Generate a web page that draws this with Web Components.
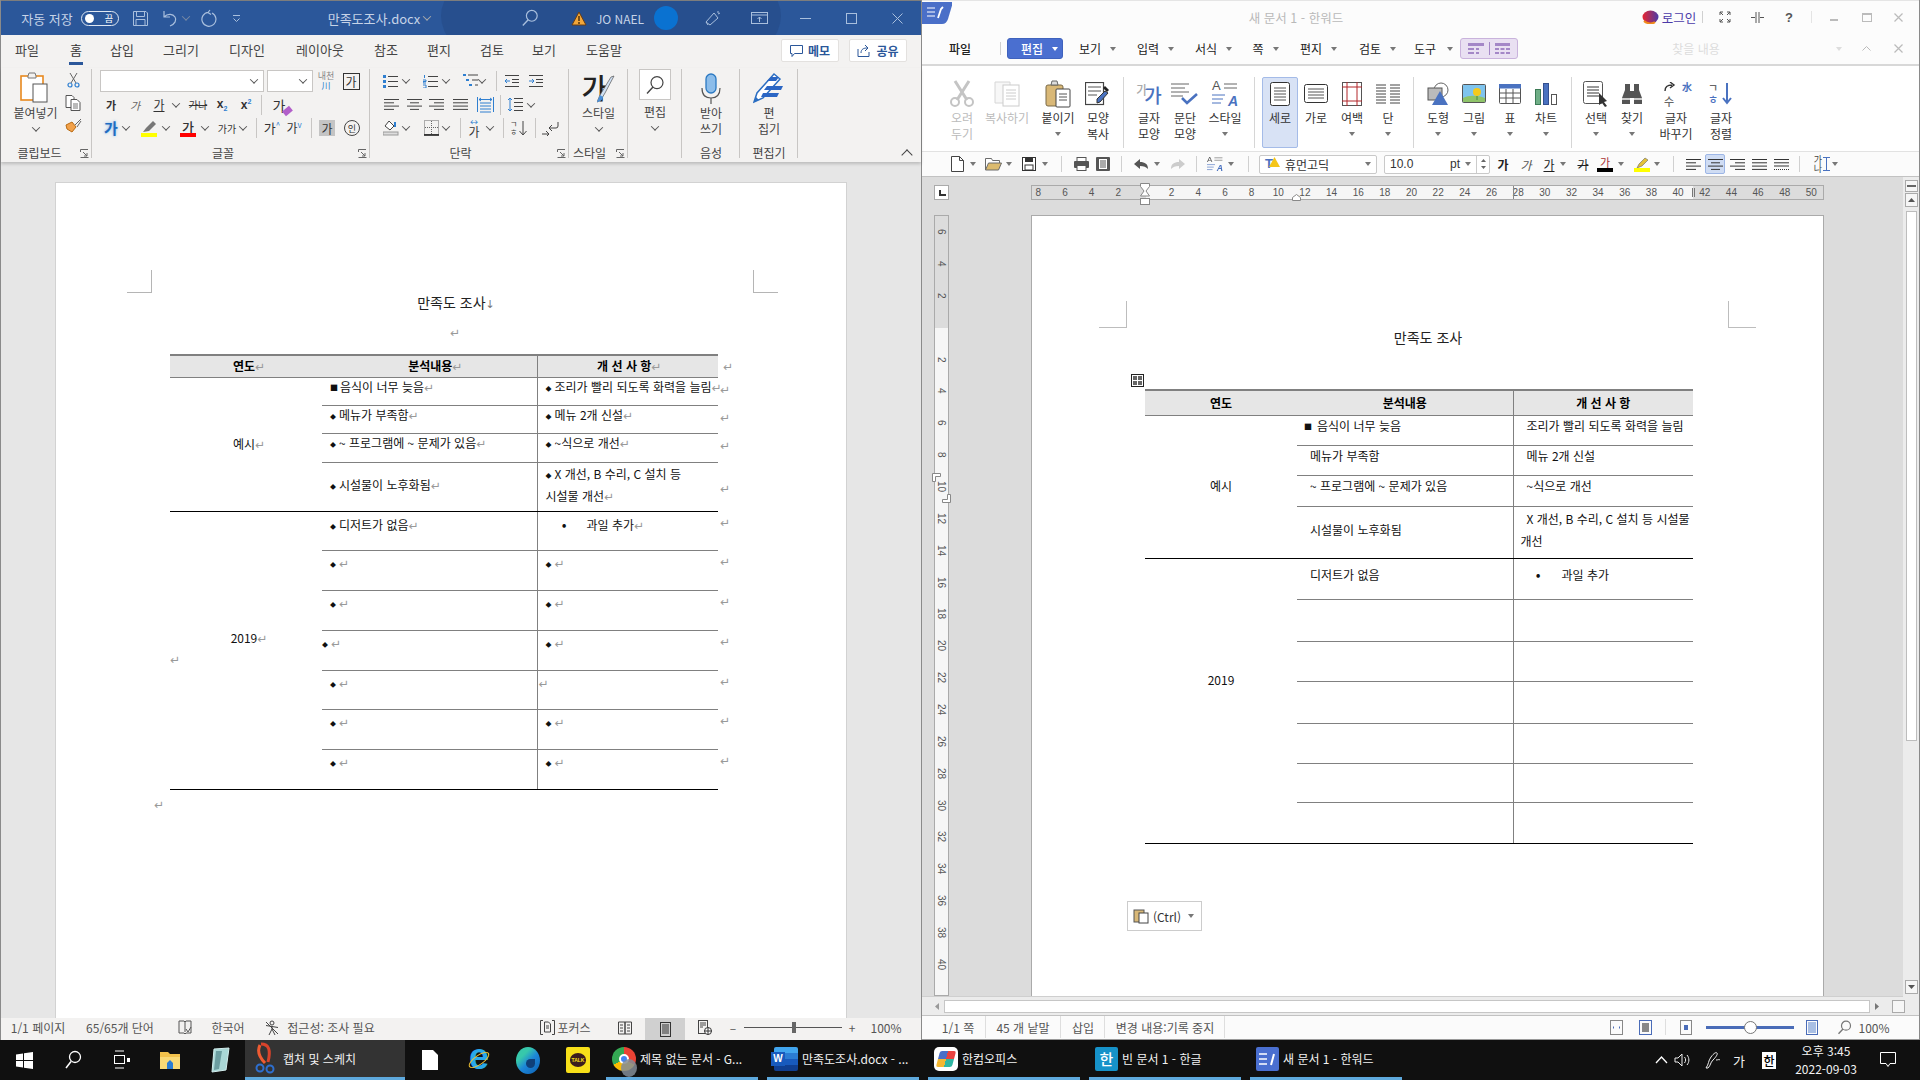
<!DOCTYPE html>
<html lang="ko">
<head>
<meta charset="utf-8">
<title>만족도조사</title>
<style>
  html, body { margin: 0; height: 100%; overflow: hidden; background: #777; }
  body { font: 12px "Noto Sans CJK KR", "Noto Sans", sans-serif; }
</style>
</head>
<body>
<desktop-shell></desktop-shell>
<script>
const svg = (w, h, inner, attrs = '') => `<svg width="${w}" height="${h}" viewBox="0 0 ${w} ${h}" fill="none" ${attrs} style="display:block;flex:none">${inner}</svg>`;

// places items so each is centred on the given x, in flow
function line(x0, items, cls = 'c') {
  let pos = x0;
  return items.map(([c, html], i) => {
    const next = items[i + 1] ? items[i + 1][0] : c + 40;
    const half = Math.max(0.5, Math.min(c - pos, (next - c) / 2));
    const ml = c - half - pos;
    pos = c + half;
    return `<span class="${cls}" style="margin-left:${ml}px;width:${2 * half}px">${html}</span>`;
  }).join('');
}

const COMMON = `
  * { box-sizing: border-box; }
  .c { display: flex; justify-content: center; align-items: center; flex: none; white-space: nowrap; height: 100%; }
  .c > * { flex: none; }
  .row { display: flex; align-items: center; }
  .chev::before { content: ""; display: block; width: 5px; height: 5px; border: solid #555; border-width: 0 1px 1px 0; transform: rotate(45deg) translate(-1px,-1px); }
  .tri { display: block; width: 0; height: 0; border: 3.5px solid transparent; border-top: 4px solid #777; border-bottom: 0; }
  .vs { display: block; width: 1px; height: 100%; background: #c8c6c4; }
`;

function define(tag, css, html) {
  customElements.define(tag, class extends HTMLElement {
    connectedCallback() {
      if (this.shadowRoot) return;
      this.attachShadow({ mode: 'open' });
      const out = typeof html === 'function' ? html(this) : html;
      this.shadowRoot.innerHTML = `<style>${COMMON}${css}</style>${out}`;
    }
  });
}

/* ---------- icons ---------- */
const L = '#a9bfdd', G = '#444', B = '#2f7fd0';
const icon = {
  save: svg(17, 17, `<path d="M1.5 1.5h12.5l1.500 1.500v12.500h-14zM4.500 1.500v5h8v-5M4 15.500v-6h9v6" stroke="${L}"/>`),
  undo: svg(18, 18, `<path d="M3 2v6h6M3 8c4-4 9-3 11 0s0 7-5 9" stroke="${L}" stroke-width="1.200"/>`),
  redo: svg(18, 18, `<path d="M11 1L9 3.500l3 2M9.500 3.300a7 7 0 1 0 3.500.7" stroke="${L}" stroke-width="1.200"/>`),
  qat: svg(9, 9, `<path d="M1 1.500h7M1.500 4.500l3 3 3-3" stroke="${L}"/>`),
  search: (c, s = 18) => svg(s, s, `<circle cx="${s * .6}" cy="${s * .38}" r="${s * .3}" stroke="${c}" stroke-width="1.200"/><path d="M${s * .4} ${s * .6}L${s * .1} ${s * .92}" stroke="${c}" stroke-width="1.400"/>`),
  warn: svg(16, 15, `<path d="M8 1l7 13H1z" fill="#f2a73a" stroke="#6b3d10"/><path d="M8 5v5M8 11v2" stroke="#3b2208" stroke-width="1.300"/>`),
  coach: svg(18, 18, `<path d="M2 13l8-9 4 5-8 7zM2 13l2 3" stroke="${L}"/><path d="M14 2v2M16 4l-2 1" stroke="${L}"/>`),
  display: svg(17, 14, `<rect x=".5" y="1.500" width="16" height="11" stroke="${L}"/><path d="M1 4h15M8.500 11V6M6.500 8l2-2 2 2" stroke="${L}"/>`),
  wmin: svg(11, 11, `<path d="M0 5.500h11" stroke="${L}"/>`),
  wmax: svg(11, 11, `<rect x=".5" y=".5" width="10" height="10" stroke="${L}"/>`),
  wclose: svg(11, 11, `<path d="M.5.5l10 10M10.500.5l-10 10" stroke="${L}"/>`),
  comment: svg(13, 12, `<path d="M.5.500h12v8h-8l-2.500 3v-3H.5z" stroke="#2b579a"/>`),
  share: svg(14, 13, `<path d="M1 5v7.500h11V8M4 9c0-4 3-5 6-5M8 1l3 3-3 3" stroke="#2b579a"/>`),
  paste: svg(32, 34, `<rect x="1" y="5" width="22" height="24" fill="#fff" stroke="#e8891e" stroke-width="1.600"/><path d="M8 5l1-3h6l1 3v2H8z" fill="#f3f2f1" stroke="#777"/><rect x="13" y="13" width="14" height="18" fill="#fff" stroke="#555"/>`),
  cut: svg(13, 16, `<path d="M3 1l6 10M10 1L4 11" stroke="#666"/><circle cx="3" cy="13" r="2" stroke="${B}" stroke-width="1.200"/><circle cx="10" cy="13" r="2" stroke="${B}" stroke-width="1.200"/>`),
  copy: svg(16, 16, `<path d="M1 .5h6l2 2v10H1z" fill="#fff" stroke="#555"/><path d="M6 4.500h6l3 3v8H6z" fill="#fff" stroke="#555"/><path d="M8 9h5M8 11h5M8 13h5" stroke="#777"/>`),
  brush: svg(17, 15, `<path d="M1 7l6-3 4 5-4 5-5-3z" fill="#f2a14a" stroke="#b96b12"/><path d="M10 7l6-6M12 9l4-6" stroke="#666"/>`),
  bullets: svg(16, 13, `<path d="M5 1.500h10M5 6.500h10M5 11.500h10" stroke="#444"/><rect y="0" width="3" height="3" fill="${B}"/><rect y="5" width="3" height="3" fill="${B}"/><rect y="10" width="3" height="3" fill="${B}"/>`),
  numbers: svg(16, 13, `<path d="M5 1.500h10M5 6.500h10M5 11.500h10" stroke="#444"/><path d="M1.500 0v3M0 5h3v1.500H0V8h3M0 10h3v3H0" stroke="${B}"/>`),
  multi: svg(16, 14, `<rect width="3" height="2" fill="${B}"/><rect x="3" y="5" width="3" height="2" fill="${B}"/><rect x="6" y="10" width="3" height="2" fill="${B}"/><path d="M5 1h10M9 6h6M12 11h3" stroke="#444"/>`),
  indL: svg(16, 12, `<path d="M1 .5h14M8 4.500h7M8 7.500h7M1 11.500h14" stroke="#444"/><path d="M6 6H1M3 4L1 6l2 2" stroke="${B}"/>`),
  indR: svg(16, 12, `<path d="M1 .5h14M8 4.500h7M8 7.500h7M1 11.500h14" stroke="#444"/><path d="M1 6h5M4 4l2 2-2 2" stroke="${B}"/>`),
  al: (a, c = '#444') => {
    const rows = { l: [[0, 15], [0, 10], [0, 15], [0, 10]], c: [[0, 15], [3, 12], [0, 15], [3, 12]], r: [[0, 15], [5, 15], [0, 15], [5, 15]], j: [[0, 15], [0, 15], [0, 15], [0, 15]] }[a];
    return svg(15, 13, rows.map((r, i) => `<path d="M${r[0]} ${1.5 + i * 3.3}H${r[1]}" stroke="${c}"/>`).join(''));
  },
  dist: svg(17, 17, `<path d="M.5 1v15M16.500 1v15M3 7h11M3 10h11M3 13h11M3 16h11" stroke="${B}"/><path d="M2 3.500h13M4 2L2 3.500 4 5M13 2l2 1.500L13 5" stroke="${B}"/>`),
  spacing: svg(16, 15, `<path d="M7 1.500h9M7 5.500h9M7 9.500h9M7 13.500h9" stroke="#444"/><path d="M3 1v13M1 3l2-2 2 2M1 12l2 2 2-2" stroke="${B}"/>`),
  fill: svg(17, 17, `<path d="M6 1l5 5-4 4-5-4z" fill="#fff" stroke="#444"/><path d="M12 2v5" stroke="${B}" stroke-width="2"/><rect y="12" width="15" height="3" fill="#ddd" stroke="#999"/>`),
  border: svg(15, 16, `<rect x=".5" y=".5" width="14" height="14" stroke="#666" stroke-dasharray="1 1"/><path d="M7.500 1v13M1 7.500h13" stroke="#666" stroke-dasharray="1 1"/><path d="M0 15h15" stroke="#111" stroke-width="1.500"/>`),
  sort: svg(18, 16, `<path d="M14 1v13M10.500 11l3.500 4 3.500-4" stroke="#444"/>`),
  mark: svg(17, 15, `<path d="M16 1v4a2 2 0 0 1-2 2H8M10 4L7 7l3 3" stroke="#444"/><path d="M0 13h7M4 10l3 3-3 3" stroke="#444"/>`),
  mic: svg(22, 32, `<rect x="6" y="1" width="10" height="19" rx="5" fill="#8cbdea" stroke="#2b79c2" stroke-width="1.300"/><path d="M2 15c0 8 4 10 9 10s9-2 9-10M11 25v6" stroke="#555" stroke-width="1.200"/>`),
  editor: svg(32, 32, `<path d="M1 30l3-9L21 2l6 5L10 26z" fill="#fff" stroke="#2b6ec2" stroke-width="1.500"/><path d="M14 14h16l-2 4H11zM10 21h16l-2 4H8z" fill="#2b66c4"/><path d="M18 5l8 0-3 4H14z" fill="#2b66c4"/><path d="M1 30l5-2-3-3z" fill="#2b6ec2"/>`),
  launcher: svg(9, 9, `<path d="M.5 3V.5H8M8.500 8.500H.5M3 3l4 4M7 4v3H4" stroke="#666"/>`),
  book: svg(14, 15, `<path d="M1 1h5l1 1 1-1h5v12H8l-1 1-1-1H1zM7 2v10" stroke="#555"/><path d="M8 9l2 3 3-5" stroke="#555"/>`),
  access: svg(16, 16, `<circle cx="8" cy="3" r="2" stroke="#444"/><path d="M2 5.500l12 2M8 6v3M5 15l3-6 3 6M2 2l12 12" stroke="#444"/>`),
  focus: svg(15, 15, `<path d="M3 .5H.5V14.500H3M12 .5h2.500v14H12" stroke="#444"/><path d="M4.500 2h4l2 2v8h-6zM6 6h3M6 8h3" stroke="#444"/>`),
  vRead: svg(14, 14, `<path d="M.5 1H7v12H.5zM7 1h6.500v12H7zM2 4h3M2 7h3M2 10h3M9 4h3M9 7h3M9 10h3" stroke="#444"/>`),
  vPrint: svg(11, 15, `<rect x=".5" y=".5" width="10" height="14" stroke="#333"/><path d="M2 3h7M2 5h7M2 7h7M2 9h7M2 11h7" stroke="#333"/>`),
  vWeb: svg(14, 15, `<rect x=".5" y=".5" width="9" height="13" stroke="#444"/><path d="M2 3h6M2 5h6M2 7h3" stroke="#444"/><circle cx="10" cy="11" r="3.500" fill="#fff" stroke="#333"/><path d="M6.500 11h7M10 7.500v7" stroke="#333"/>`),
};

/* ---------- hanword icons ---------- */
const hi = {
  scissors: svg(24, 28, `<path d="M5 1l12 19M19 1L7 20" stroke="#c4c4c4" stroke-width="3"/><circle cx="5" cy="22" r="4" stroke="#c4c4c4" stroke-width="2"/><circle cx="19" cy="22" r="4" stroke="#c4c4c4" stroke-width="2"/>`),
  copy: svg(26, 26, `<path d="M1 1h15v21H1z" fill="#f7f7f7" stroke="#d6d6d6"/><rect x="9" y="4" width="16" height="21" fill="#fff" stroke="#ccc"/><path d="M12 9h10M12 12h10M12 15h10M12 18h10" stroke="#ccc"/>`),
  paste: svg(26, 28, `<rect x="1" y="5" width="17" height="21" rx="2" fill="#d9b877" stroke="#7a6a48"/><path d="M6 5l1-4h5l1 4z" fill="#ddd" stroke="#666"/><rect x="11" y="9" width="14" height="18" rx="1" fill="#fff" stroke="#444"/><path d="M14 14h8M14 17h8M14 20h8" stroke="#555"/>`),
  format: svg(26, 24, `<rect x=".5" y=".5" width="18" height="22" fill="#fff" stroke="#444" stroke-width="1.200"/><path d="M3 5h13M3 9h13M3 13h9" stroke="#555"/><path d="M12 21l3-1 8-9-3-2-8 8z" fill="#4a72c0" stroke="#333"/><path d="M20 4l4 4-2 2-4-4z" fill="#222"/>`),
  charShape: `<span class="hg"><b style="color:#aaa;font-size:12px;margin:-8px -3px 0 0;font-weight:500">가</b><b style="color:#4a72c0;font-size:19px;font-weight:500">가</b></span>`,
  para: svg(28, 24, `<path d="M0 2h18M0 6h14M0 10h18M0 14h12" stroke="#666"/><path d="M11 16l5 5 10-9" stroke="#4a72c0" stroke-width="2.600"/>`),
  style: `<span class="st"><b>A</b>${svg(26, 25, `<path d="M12 3h13M12 7h13" stroke="#666"/><path d="M0 14h13M0 18h11M0 22h9" stroke="#4a72c0"/>`)}<i>A</i></span>`,
  portrait: svg(20, 24, `<rect x=".5" y=".5" width="19" height="23" rx="2" fill="#fff" stroke="#333"/><path d="M4 6h12M4 9h12M4 12h12M4 15h12M4 18h12" stroke="#555"/>`),
  landscape: svg(24, 20, `<rect x=".5" y=".5" width="23" height="18" rx="2" fill="#fff" stroke="#333"/><path d="M4 5h16M4 8h16M4 11h16M4 14h16" stroke="#555"/>`),
  margin: svg(20, 24, `<rect x=".5" y=".5" width="19" height="23" fill="#fff" stroke="#555"/><path d="M5 0v24M15 0v24M0 5h20M0 19h20" stroke="#b3262a"/>`),
  columns: svg(24, 20, `<path d="M0 1h10M0 4h10M0 7h10M0 10h10M0 13h10M0 16h10M0 19h10M14 1h10M14 4h10M14 7h10M14 10h10M14 13h10M14 16h10M14 19h10" stroke="#444"/>`),
  shape: svg(22, 24, `<circle cx="14" cy="8" r="7" fill="#fff" stroke="#666"/><rect x="1" y="6" width="14" height="12" fill="#bbb" stroke="#555"/><path d="M13 9l8 14H5z" fill="#4a72c0"/>`),
  picture: svg(24, 20, `<rect x=".5" y=".5" width="23" height="18" rx="1" fill="#7fc4ee" stroke="#555"/><path d="M1 14c6-3 14-3 22 0v4H1z" fill="#8fc46a"/><circle cx="15" cy="8" r="4" fill="#f5c91c"/><path d="M15 12v4" stroke="#4a8a3a"/>`),
  table: svg(22, 20, `<rect x=".5" y=".5" width="21" height="19" rx="1" fill="#fff" stroke="#555"/><rect width="22" height="4.500" fill="#4a72c0"/><path d="M0 9h22M0 14h22M7 5v14M14 5v14" stroke="#555"/>`),
  chart: svg(22, 22, `<rect x=".5" y="6.500" width="5" height="15" fill="#6fae86" stroke="#3b7a55"/><rect x="8.500" y=".5" width="5" height="21" fill="#4a72c0" stroke="#34508f"/><rect x="16.500" y="11.500" width="5" height="10" fill="#fff" stroke="#555"/>`),
  select: svg(26, 26, `<rect x=".5" y=".5" width="19" height="22" rx="2" fill="#fff" stroke="#555"/><path d="M4 6h12M4 9h12M4 12h12M4 15h12" stroke="#999" stroke-width="2"/><path d="M16 12l8 8-3 1 3 4-2 1-3-4-3 2z" fill="#333"/>`),
  binoculars: svg(20, 22, `<path d="M3 1h5v7h4V1h5v6l3 8v6h-8v-6H8v6H0v-6l3-8z" fill="#555"/><rect y="15" width="8" height="2" fill="#ccc"/><rect x="12" y="15" width="8" height="2" fill="#ccc"/>`),
  replace: `<span class="rp"><b style="color:#666">수</b><em>水</em>${svg(12, 10, `<path d="M1 9c0-5 3-6 7-6M6 0l4 3-4 3" stroke="#333" stroke-width="1.400"/>`)}</span>`,
  sortAsc: `<span class="sa"><b style="color:#666">ㄱ</b><b style="color:#4a72c0">ㅎ</b>${svg(10, 22, `<path d="M5 0v20M1 15l4 5 4-5" stroke="#4a72c0" stroke-width="2"/>`)}</span>`,
  new: svg(13, 16, `<path d="M.5.5h8l4 4v11H.5zM8.500.5v4h4" fill="#fff" stroke="#444"/>`),
  open: svg(17, 14, `<path d="M.5 13V1.500h6l1 2h7V6" fill="#fff" stroke="#6b6b6b"/><path d="M.5 13l3-7h13l-3 7z" fill="#dcbb6f" stroke="#6b6b6b"/>`),
  save: svg(14, 14, `<rect x=".5" y=".5" width="13" height="13" fill="#fff" stroke="#333"/><rect x="3" y="1" width="8" height="4" fill="#333"/><rect x="3" y="8" width="8" height="5" fill="#fff" stroke="#333"/>`),
  print: svg(15, 14, `<rect y="4" width="15" height="7" rx="1" fill="#555"/><rect x="3" y=".5" width="9" height="4" fill="#fff" stroke="#555"/><rect x="3" y="8.500" width="9" height="5" fill="#fff" stroke="#555"/>`),
  preview: svg(14, 14, `<rect width="14" height="14" rx="1" fill="#555"/><rect x="3" y="2" width="8" height="10" fill="#fff"/><path d="M4 4h6M4 6h6M4 8h6M4 10h6" stroke="#555"/>`),
  undo: svg(15, 11, `<path d="M6 0L0 5l6 5V7c4 0 6 1 8 3 0-5-3-7-8-7z" fill="#555"/>`),
  redo: svg(15, 11, `<path d="M9 0l6 5-6 5V7C5 7 3 8 1 10c0-5 3-7 8-7z" fill="#ccc"/>`),
};

/* ---------- shared document table ---------- */
const RET = '<span class="ret">↵</span>';
define('doc-table', `
  :host { display: block; }
  table { border-collapse: collapse; table-layout: fixed; }
  td { padding: 0; vertical-align: top; color: #111; white-space: nowrap; }
  th { padding: 0; font-weight: 700; background: #e6e6e6; border-top: 2px solid #808080; border-bottom: 1px solid #808080; color: #000; line-height: 18px; }
  td.m, th.m { background: none; border: 0; font-weight: 400; }
  .ret { color: #999; font: 12px/1 "DejaVu Sans", sans-serif; }
  .b { display: inline-block; font-size: 6px; width: 9px; vertical-align: 1px; line-height: 1; }
  .bb { display: inline-block; font-size: 8px; width: 10px; vertical-align: 1px; line-height: 1; }
  .line { border-bottom: 1px solid #808080; }
  .strong { border-bottom: 1px solid #000; }
  .v { border-left: 1px solid #808080; }
  .year { text-align: center; vertical-align: middle; }
  .mid td { vertical-align: middle; padding-bottom: 4px; line-height: 22px; }
`, (el) => {
  const word = el.getAttribute('variant') === 'word';
  const h = word ? [22, 28, 28, 29, 49, 39, 40, 40, 40, 39, 40, 40] : [25, 30, 30, 31, 52, 41, 42, 40, 42, 40, 39, 41];
  const w = word ? [152, 215, 181, 20] : [152, 216, 180];
  const ret = word ? RET : '';
  const bullet = word ? '<span class="b">◆</span>' : '';
  const pad2 = word ? 8 : 13, pad3 = word ? 8 : 13;
  const lh = word ? 18 : 20;
  const yp = word ? 6 : 0;
  const rows = [
    [`<span class="bb"${word ? '' : ' style="width:13px"'}>■</span>음식이 너무 늦음`, '조리가 빨리 되도록 화력을 늘림'],
    ['메뉴가 부족함', '메뉴 2개 신설'],
    ['~ 프로그램에 ~ 문제가 있음', '~식으로 개선'],
    ['시설물이 노후화됨', word ? 'X 개선, B 수리, C 설치 등<br>시설물 개선' : 'X 개선, B 수리, C 설치 등 시설물<br><span style="margin-left:-6px">개선</span>'],
    ['디저트가 없음', null],
    ['', ''], ['', ''], ['', ''], ['', ''], ['', ''], ['', ''],
  ];
  const head = `<tr style="height:${h[0]}px">
    <th style="padding-left:${yp}px">연도${ret}</th><th style="padding-left:${word ? 12 : 0}px">분석내용${ret}</th><th class="v" style="padding-left:${word ? 3 : 0}px">개 선 사 항${ret}</th>
    ${word ? `<th class="m">${RET}</th>` : ''}</tr>`;
  const body = rows.map((r, i) => {
    const strong = i === 3 || i === 10 ? 'strong' : 'line';
    let year = '';
    if (i === 0) year = `<td rowspan="4" class="year strong" style="padding-left:${yp}px;padding-bottom:${word ? 0 : 2}px">예시${ret}</td>`;
    if (i === 4) year = `<td rowspan="7" class="year strong" style="padding-left:${yp}px;padding-bottom:${word ? 0 : 42}px">2019${ret}${word ? `<div style="text-align:left;line-height:24px;margin-left:-6px">${RET}</div>` : ''}</td>`;
    const isSquare = i === 0;
    const pre2 = isSquare ? '' : bullet;
    const cell2 = i >= 5 ? (word ? `${bullet}${ret}` : '') : `${pre2}${r[0]}${ret}`;
    let cell3;
    if (r[1] === null) cell3 = `<span style="display:inline-block;width:${word ? 21 : 14}px;text-align:right;margin-right:${word ? 20 : 21}px;font-size:14px;line-height:14px">•</span>과일 추가${ret}`;
    else cell3 = i >= 5 ? (word ? `${bullet}${ret}` : '') : `${bullet}${r[1]}${ret}`;
    let p2 = isSquare && !word ? 7 : pad2;
    let p3 = pad3;
    if (word && i === 7) p2 = 0;
    if (word && i === 8) { cell3 = ret; p3 = 1; }
    const top = i < 4 ? 0 : word ? (i === 4 ? 4 : 3) : 6;
    return `<tr style="height:${h[i + 1]}px" class="${i === 3 ? 'mid' : ''}">${year}
      <td class="${strong}" style="padding-left:${p2}px;padding-top:${top}px">${cell2}</td>
      <td class="${strong} v" style="padding-left:${p3}px;padding-top:${top}px">${cell3}</td>
      ${word ? `<td class="m" style="padding-left:2px;padding-top:${i >= 4 ? 2 : 3}px;padding-bottom:0">${RET}</td>` : ''}</tr>`;
  }).join('');
  return `<table style="line-height:${lh}px;width:${w.reduce((a, b) => a + b)}px"><colgroup>${w.map(x => `<col style="width:${x}px">`).join('')}</colgroup>${head}${body}</table>`;
});

/* ---------- word: ribbon group ---------- */
define('ribbon-group', `
  :host { display: flex; flex-direction: column; flex: none; height: 94px; position: relative; }
  .body { flex: 1; min-height: 0; }
  .lb { height: 17px; line-height: 15px; text-align: center; color: #444; font-size: 12px; }
  .sep { position: absolute; right: 0; top: 1px; width: 1px; height: 89px; background: #c8c6c4; }
  .ln { position: absolute; right: 3px; bottom: 4px; }
`, (el) => `<div class="body"><slot></slot></div>
  <div class="lb" style="padding-right:${el.getAttribute('lbpad') || 0}px">${el.getAttribute('label') || '&nbsp;'}</div>
  ${el.hasAttribute('launcher') ? `<span class="ln">${icon.launcher}</span>` : ''}<span class="sep"></span>`);

/* ---------- word window ---------- */
const fc = (t, s) => `<span style="${s}">${t}</span>`;
define('word-window', `
  :host { display: flex; flex-direction: column; width: 921px; height: 1040px; color: #333; border-left: 1px solid #8a8a8a; }
  .title { height: 35px; flex: none; background: #2b579a; color: #c6d3e7; display: flex; align-items: center; position: relative; overflow: hidden; border-top: 1px solid #7d7d7d; font-size: 12px; }
  .title > span { position: relative; }
  .title > .blob { position: absolute; left: 440px; top: -60px; width: 340px; height: 150px; border-radius: 50%; background: #274f8e; }
  .toggle { width: 38px; height: 15px; border: 1px solid #dfe7f2; border-radius: 8px; display: flex; align-items: center; justify-content: space-between; padding: 0 5px 0 3px; color: #fff; font-size: 9px; }
  .toggle i { width: 9px; height: 9px; background: #fff; border-radius: 50%; }
  .avatar { width: 24px; height: 24px; border-radius: 50%; background: #0a72d1; }
  .tabs { height: 33px; flex: none; background: #f3f2f1; display: flex; font-size: 13px; color: #444; position: relative; align-items: center; padding-bottom: 4px; }
  .tabs .on { position: relative; color: #333; }
  .tabs .on::after { content: ""; position: absolute; left: -1px; right: -1px; top: 22px; height: 3px; background: #2b579a; }
  .btn { width: 58px; height: 23px; background: #fff; border: 1px solid #e3e1df; border-radius: 2px; display: flex; align-items: center; justify-content: center; gap: 5px; color: #2b579a; font-weight: 700; font-size: 12px; margin-top: 2px; }
  .ribbon { height: 94px; flex: none; background: #f3f2f1; display: flex; box-shadow: 0 2px 3px rgba(0,0,0,.18); position: relative; z-index: 1; }
  .collapse { position: absolute; right: 10px; bottom: 3px; width: 8px; height: 8px; border: solid #444; border-width: 1px 0 0 1px; transform: rotate(45deg); }
  .row { height: 24px; }
  .sel { height: 22px; background: #fff; border: 1px solid #c8c6c4; display: flex; align-items: center; justify-content: flex-end; padding-right: 6px; }
  .big { display: flex; flex-direction: column; align-items: center; }
  .big .ic { height: 37px; display: flex; align-items: center; justify-content: center; }
  .big .t { line-height: 16px; color: #444; font-size: 12px; white-space: nowrap; }
  .big .chev { height: 15px; display: flex; align-items: center; }
  .doc { flex: 1; min-height: 0; background: #e6e6e6; overflow: hidden; padding: 20px 0 0 54px; }
  .page { width: 792px; height: 900px; background: #fff; border: 1px solid #d2d2d2; position: relative; padding: 108px 0 0 114px; font-size: 12px; }
  .crop { position: absolute; top: 87px; width: 25px; height: 23px; }
  .crop.l { left: 71px; border: solid #b5b5b5; border-width: 0 1px 1px 0; }
  .crop.r { left: 697px; border: solid #b5b5b5; border-width: 0 0 1px 1px; }
  .h { width: 548px; text-align: center; font-size: 14px; line-height: 22px; margin-left: 12px; color: #222; }
  .para { width: 548px; text-align: center; color: #999; margin-left: 11px; font: 12px/40px "DejaVu Sans", sans-serif; height: 41px; }
  .after { color: #999; font: 12px/22px "DejaVu Sans", sans-serif; margin: 4px 0 0 -16px; }
  .status { height: 22px; flex: none; background: #f3f2f1; display: flex; align-items: center; color: #555; font-size: 12px; position: relative; padding-bottom: 3px; }
  .status .active { margin-top: 3px; }
  .active { background: #d0d0d0; width: 40px; height: 22px; display: flex; align-items: center; justify-content: center; }
  .slider { width: 98px; height: 1px; background: #555; position: relative; }
  .slider i { position: absolute; left: 48px; top: -5px; width: 4px; height: 11px; background: #666; }
`, () => {
  const ch = '<span class="chev"></span>';
  const vs = '<span class="vs" style="height:20px"></span>';
  const title = line(1, [
    [47, '<span style="font-size:13px">자동 저장</span>'], [100, '<span class="toggle"><i></i>끔</span>'], [140, icon.save], [170, icon.undo], [186, `<span class="chev" style="filter:invert(1);opacity:.6"></span>`],
    [208, icon.redo], [236, icon.qat], [374, '<span style="font-size:13px">만족도조사.docx</span>'], [427, `<span class="chev" style="filter:invert(1)"></span>`],
    [530, icon.search(L)], [579, icon.warn], [620, 'JO NAEL'], [666, '<span class="avatar"></span>'], [713, icon.coach], [759, icon.display],
    [805, icon.wmin], [851, icon.wmax], [897, icon.wclose],
  ]);
  const tabs = line(1, [[27, '파일'], [76, '<span class="on">홈</span>'], [122, '삽입'], [181, '그리기'], [247, '디자인'], [320, '레이아웃'], [386, '참조'], [439, '편지'], [492, '검토'], [544, '보기'], [604, '도움말'],
    [810, `<span class="btn">${icon.comment}메모</span>`], [878, `<span class="btn">${icon.share}공유</span>`]]);
  const clip = `<div class="row" style="height:77px;align-items:flex-start;padding-left:5px">
    <span style="width:59px" class="big"><span class="ic" style="padding-top:2px">${icon.paste}</span><span class="t">붙여넣기</span><span class="chev"></span></span>
    <span style="display:flex;flex-direction:column;align-items:center;gap:7px;padding-top:4px;width:16px">${icon.cut}${icon.copy}${icon.brush}</span></div>`;
  const r1 = line(92, [[182, '<span class="sel" style="width:164px"><span class="chev"></span></span>'], [290, '<span class="sel" style="width:46px"><span class="chev"></span></span>'],
    [326, `<span style="display:flex;flex-direction:column;align-items:center;line-height:10px;font-size:9px;color:#888">내천<span style="color:#2f7fd0">川</span></span>`],
    [351, '<span style="width:17px;height:17px;border:1px solid #333;display:flex;align-items:center;justify-content:center;font-size:12px">가</span>']]);
  const r2 = line(92, [[111, fc('가', 'font-weight:700;font-size:11px')], [135, fc('가', 'font-style:italic;font-size:11px;color:#666')], [159, fc('가', 'text-decoration:underline;font-size:12px')], [176, ch],
    [198, fc('가나', 'text-decoration:line-through;font-size:10px')], [222, `<b style="font:700 12px 'Liberation Sans'">x<sub style="font-size:7px;color:${B}">2</sub></b>`], [246, `<b style="font:700 12px 'Liberation Sans'">x<sup style="font-size:7px;color:${B}">2</sup></b>`],
    [261, vs], [279, `<span style="position:relative;font-size:14px;line-height:18px">가<span style="position:absolute;right:-7px;bottom:0;width:9px;height:6px;background:#b25fc9;transform:rotate(-40deg)"></span></span>`]]);
  const r3 = line(92, [[111, `<span style="font-size:15px;line-height:20px;font-weight:700;color:#1f6cc1;text-shadow:0 0 3px #7db9ef">가</span>`], [126, ch],
    [149, `<span style="display:flex;flex-direction:column;align-items:center">${svg(16, 13, `<path d="M2 12l3-4 7-7 3 3-7 7z" fill="#777"/>`)}<i style="width:16px;height:4px;background:#ff0;display:block"></i></span>`], [166, ch],
    [188, `<span style="display:flex;flex-direction:column;align-items:center;line-height:13px;font-size:13px;font-weight:500">가<i style="width:16px;height:4px;background:#f00;display:block"></i></span>`], [205, ch],
    [227, fc('가가', 'font-size:10px')], [243, ch], [256, vs],
    [272, `<span style="font-size:13px;line-height:18px">가<sup style="color:${B};font-size:8px;line-height:0">^</sup></span>`], [294, `<span style="font-size:12px;line-height:18px">가<sup style="color:${B};font-size:8px;line-height:0">v</sup></span>`], [311, vs],
    [327, '<span style="width:16px;height:16px;background:#c4c4c4;display:flex;align-items:center;justify-content:center;font-size:12px">가</span>'],
    [352, '<span style="width:16px;height:16px;border:1px solid #444;border-radius:50%;display:flex;align-items:center;justify-content:center;font-size:9px">인</span>']]);
  const p1 = line(370, [[391, icon.bullets], [406, ch], [431, icon.numbers], [446, ch], [471, icon.multi], [482, ch], [496, vs], [512, icon.indL], [536, icon.indR]]);
  const p2 = line(370, [[391, icon.al('l')], [414, icon.al('c')], [436, icon.al('r')], [460, icon.al('j')], [485, icon.dist], [500, vs], [515, icon.spacing], [531, ch]]);
  const p3 = line(370, [[391, icon.fill], [406, ch], [431, icon.border], [446, ch], [460, vs],
    [474, `<span style="display:flex;flex-direction:column;align-items:center"><span style="font-size:8px;line-height:7px;color:${B}">↔</span><span style="font-size:12px;line-height:13px">가</span></span>`], [490, ch], [503, vs],
    [519, `<span style="display:flex;align-items:center;width:18px;height:16px"><span style="display:flex;flex-direction:column;line-height:8px;font-size:8px;color:#444">ㄱ<span>ㅎ</span></span><span style="margin-left:-8px">${icon.sort}</span></span>`], [535, vs], [550, icon.mark]]);
  const page = `<div class="h">만족도 조사<span style="color:#777;font:11px 'DejaVu Sans'">↓</span></div><div class="para">↵</div>
    <div><doc-table variant="word"></doc-table></div><div class="after">↵</div><span class="crop l"></span><span class="crop r"></span>`;
  const status = line(1, [[38, '1/1 페이지'], [120, '65/65개 단어'], [185, icon.book], [228, '한국어'], [272, icon.access], [331, '접근성: 조사 필요'], [547, icon.focus], [574, '포커스'], [625, icon.vRead],
    [665, `<span class="active">${icon.vPrint}</span>`], [705, icon.vWeb], [733, '–'], [793, '<span class="slider"><i></i></span>'], [852, '+'], [886, '100%']]);
  return `<div class="title"><span class="blob"></span>${title}</div>
    <div class="tabs">${tabs}</div>
    <div class="ribbon">
      <ribbon-group label="클립보드" launcher lbpad="14" style="width:91px">${clip}</ribbon-group>
      <ribbon-group label="글꼴" launcher lbpad="16" style="width:278px;padding-top:1px"><div class="row">${r1}</div><div class="row" style="height:23px">${r2}</div><div class="row">${r3}</div></ribbon-group>
      <ribbon-group label="단락" launcher lbpad="18" style="width:199px;padding-top:1px"><div class="row">${p1}</div><div class="row" style="height:23px">${p2}</div><div class="row">${p3}</div></ribbon-group>
      <ribbon-group label="스타일" launcher lbpad="18" style="width:59px"><div class="big"><span class="ic" style="position:relative;width:56px"><span style="font-size:28px;color:#222;font-weight:500;line-height:36px;margin-right:8px">가</span><span style="position:absolute;left:26px;top:7px">${svg(18, 28, `<path d="M17 1L8 18l-3 5c-2 3-4 4-5 4l3-7 11-18z" fill="#cfe1f5" stroke="#555" stroke-width=".7"/><path d="M0 27c2 0 5-1 6-5l-3-2z" fill="#4a90d9"/>`)}</span></span><span class="t">스타일</span><span class="chev"></span></div></ribbon-group>
      <ribbon-group style="width:54px"><div class="big" style="padding-top:1px"><span style="width:32px;height:31px;background:#fff;border:1px solid #c8c6c4;display:flex;align-items:center;justify-content:center">${icon.search('#444', 20)}</span><span class="t" style="margin-top:4px">편집</span><span class="chev"></span></div></ribbon-group>
      <ribbon-group label="음성" style="width:58px"><div class="big"><span class="ic" style="height:37px;padding-top:4px">${icon.mic}</span><span class="t">받아</span><span class="t">쓰기</span></div></ribbon-group>
      <ribbon-group label="편집기" style="width:58px"><div class="big"><span class="ic" style="padding-top:3px">${icon.editor}</span><span class="t">편</span><span class="t">집기</span></div></ribbon-group>
      <span class="collapse"></span>
    </div>
    <div class="doc"><div class="page">${page}</div></div>
    <div class="status">${status}</div>`;
});

/* ---------- hanword window ---------- */
define('hw-item', `
  :host { display: block; width: 36px; height: 71px; }
  .box { width: 100%; height: 100%; display: flex; flex-direction: column; align-items: center; border-radius: 2px; border: 1px solid transparent; color: #333; }
  :host([active]) .box { background: #d8e2f5; border-color: #a4bbe8; }
  :host([disabled]) .box { color: #bbb; }
  .ic { height: 32px; display: flex; align-items: center; justify-content: center; flex: none; }
  .t { line-height: 16px; text-align: center; white-space: nowrap; font-size: 12px; }
  .tri { margin-top: 6px; }
`, (el) => {
  const lines = (el.getAttribute('label') || '').split('|');
  return `<div class="box"><span class="ic"><slot></slot></span>${lines.map(t => `<span class="t">${t}</span>`).join('')}${el.hasAttribute('drop') ? '<span class="tri"></span>' : ''}</div>`;
});

define('han-window', `
  :host { display: flex; flex-direction: column; flex: 1; min-width: 0; height: 1040px; background: #fcfcfc; color: #222; border-left: 1px solid #8a8a8a; border-right: 1px solid #8a8a8a; }
  .title { height: 33px; flex: none; display: flex; position: relative; align-items: center; color: #b9b9b9; font-size: 12.5px; border-top: 1px solid #e5e5e5; }
  .logo { position: absolute; left: 0; top: 0; }
  .menu { flex: none; display: flex; align-items: center; font-size: 12px; color: #222; border-bottom: 2px solid #d8d8d8; height: 33px; }
  .pri { width: 56px; height: 21px; background: #4a6fd0; border: 1px solid #3f62bd; border-radius: 3px; color: #fff; display: flex; align-items: center; justify-content: center; gap: 9px; font-weight: 500; padding-left: 9px; }
  .pri .tri { border-top-color: #fff; }
  .purple { width: 58px; height: 21px; background: #e9e0f2; border: 1px solid #c9b3dc; border-radius: 3px; display: flex; align-items: center; justify-content: space-around; padding: 0 4px; }
  .fd { color: #dcdcdc; display: block; }
  .ribbon { height: 86px; flex: none; display: flex; align-items: flex-start; background: #fff; padding-top: 8px; border-bottom: 1px solid #e2e2e2; }
  .rs { display: block; width: 1px; height: 71px; background: #d6d6d6; }
  .hg { display: flex; align-items: center; height: 28px; }
  .hg b { line-height: 1; }
  .st { position: relative; width: 26px; height: 26px; display: block; }
  .st b { position: absolute; left: 0; top: -3px; font: 500 13px "Liberation Sans", sans-serif; color: #555; }
  .st i { position: absolute; right: 0; bottom: -2px; font: italic 700 14px "Liberation Sans", sans-serif; color: #4a72c0; }
  .rp { position: relative; width: 24px; height: 26px; display: block; font-size: 11px; }
  .rp b { position: absolute; left: 0; bottom: 0; font-weight: 500; line-height: 11px; }
  .rp em { position: absolute; right: -4px; top: 0; font-style: normal; color: #4a72c0; font-weight: 700; font-size: 10px; line-height: 11px; }
  .rp svg { position: absolute; left: 0; top: 1px; }
  .sa { position: relative; width: 26px; height: 26px; display: block; font-size: 11px; line-height: 12px; }
  .sa b { display: block; font-weight: 500; }
  .sa svg { position: absolute; right: 2px; top: 2px; }
  .tool { height: 25px; flex: none; display: flex; align-items: center; background: #fbfbfb; border-bottom: 1px solid #c2c2c2; font-size: 12px; }
  .ts { display: block; width: 1px; height: 16px; background: #d0d0d0; }
  .sel { height: 19px; background: #fff; border: 1px solid #c9c9c9; border-radius: 2px; display: flex; align-items: center; padding: 0 5px; gap: 5px; color: #333; }
  .work { flex: 1; min-height: 0; background: #dcdcdc; display: grid; grid-template-columns: 109px 793px 1fr 16px; grid-template-rows: 38px 1fr 19px; }
  .corner-wrap { grid-area: 1 / 1; padding: 8px 0 0 12px; }
  .corner { display: block; width: 15px; height: 15px; background: #fff; border: 1px solid #aaa; position: relative; }
  .corner::after { content: ""; position: absolute; left: 4px; top: 4px; width: 5px; height: 4px; border: solid #333; border-width: 0 0 2px 2px; }
  .hr { grid-area: 1 / 2; margin-top: 8px; height: 15px; border: 1px solid #aaa; position: relative; background: linear-gradient(90deg, #dcdcdc 114px, #f6f6f6 114px, #f6f6f6 661px, #dcdcdc 661px); display: flex; }
  .hr > span { flex: none; width: 26.67px; text-align: center; font: 10px/13px "Liberation Sans", sans-serif; color: #555; }
  .hr > span.first { margin-left: -7px; }
  .vwrap { grid-area: 2 / 1; padding-left: 12px; overflow: hidden; position: relative; }
  .vr { width: 15px; height: 100%; border: 1px solid #aaa; background: linear-gradient(180deg, #dcdcdc 112px, #f6f6f6 112px); display: flex; flex-direction: column; overflow: hidden; }
  .vr span { flex: none; height: 31.85px; writing-mode: vertical-rl; text-align: center; font: 10px/13px "Liberation Sans", sans-serif; color: #555; display: flex; align-items: center; justify-content: center; }
  .hr .mk, .vwrap .mk { position: absolute; }
  .page { grid-area: 2 / 2; background: #fff; border: 1px solid #aaa; border-bottom: 0; position: relative; padding: 110px 0 0 113px; font-size: 12px; }
  .crop { position: absolute; top: 85px; width: 28px; height: 27px; }
  .crop.l { left: 67px; border: solid #bdbdbd; border-width: 0 1px 1px 0; }
  .crop.r { left: 696px; border: solid #bdbdbd; border-width: 0 0 1px 1px; }
  .h { width: 548px; text-align: center; font-size: 14px; color: #222; line-height: 22px; margin: 0 0 41px 9px; }
  .tbl { position: relative; }
  .grip { position: absolute; left: -14px; top: -15px; background: #fff; }
  .ctrl { position: absolute; left: 95px; top: 685px; width: 75px; height: 30px; background: #fff; border: 1px solid #ccc; display: flex; align-items: center; gap: 4px; padding-left: 5px; font-size: 12px; color: #333; }
  .side { grid-area: 2 / 3; background: #dcdcdc; }
  .topgap { grid-area: 1 / 3; }
  .vs-bar { grid-row: 1 / 4; grid-column: 4; background: #ececec; display: flex; flex-direction: column; align-items: center; padding-top: 3px; gap: 1px; }
  .sb { width: 13px; flex: none; border: 1px solid #aaa; background: #f6f6f6; display: flex; align-items: center; justify-content: center; }
  .thumb { width: 11px; height: 530px; background: #fff; border: 1px solid #bdbdbd; flex: none; margin-top: 3px; }
  .gap { flex: 1; }
  .hs-bar { grid-column: 1 / 4; grid-row: 3; background: #ececec; display: flex; align-items: center; padding-left: 11px; border-top: 1px solid #cfcfcf; gap: 3px; }
  .hthumb { width: 926px; height: 13px; background: #fff; border: 1px solid #c6c6c6; flex: none; }
  .status { height: 25px; flex: none; display: flex; align-items: center; background: #fbfbfb; border-top: 1px solid #c2c2c2; border-bottom: 1px solid #999; color: #555; font-size: 12px; padding-bottom: 1px; }
  .ss { display: block; width: 1px; height: 22px; background: #dedede; }
  .hsl { width: 88px; height: 3px; background: #4a6cb8; position: relative; display: block; }
  .hsl i { position: absolute; left: 37.5px; top: -5px; width: 13px; height: 13px; border-radius: 50%; background: #fff; border: 1px solid #777; }
`, () => {
  const X = 922;
  const tri = '<span class="tri"></span>';
  const title = line(X, [[1296, '새 문서 1 - 한워드'],
    [1650, svg(17, 14, `<defs><linearGradient id="lg" x2="1"><stop offset="0" stop-color="#e8242f"/><stop offset="1" stop-color="#4b3aa8"/></linearGradient></defs><ellipse cx="8.500" cy="7" rx="8" ry="6.500" fill="url(#lg)"/><path d="M2 11c3 3 9 3 11 1" stroke="#f08a1c" stroke-width="2"/>`)],
    [1679, '<span style="color:#4b3aa8">로그인</span>'], [1702, '<span class="ts" style="height:12px"></span>'],
    [1725, svg(12, 12, `<path d="M1 1l3 3M11 1L8 4M1 11l3-3M11 11L8 8M1 4V1h3M8 1h3v3M1 8v3h3M8 11h3V8" stroke="#555"/>`)],
    [1757, svg(13, 11, `<path d="M5 0v11M8 0v11M0 5.500h4M9 5.500h4" stroke="#555"/>`)],
    [1789, '<b style="font:700 13px \'Liberation Sans\';color:#555">?</b>'], [1811, '<span class="ts" style="height:12px;background:#e4e4e4"></span>'],
    [1834, svg(10, 10, `<path d="M1 8h8" stroke="#bbb" stroke-width="2"/>`)], [1867, svg(10, 9, `<rect x=".5" y="1.500" width="9" height="7" stroke="#bbb"/><path d="M0 1h10" stroke="#bbb" stroke-width="2"/>`)],
    [1898, svg(9, 9, `<path d="M.5.5l8 8M8.500.5l-8 8" stroke="#bbb" stroke-width="1.200"/>`)]]);
  const menu = line(X, [[960, '<b style="font-weight:500">파일</b>'], [1000, '<span class="ts" style="height:13px"></span>'],
    [1035, `<span class="pri">편집${tri}</span>`], [1090, '보기'], [1113, tri], [1148, '입력'], [1171, tri], [1206, '서식'], [1229, tri], [1258, '쪽'], [1276, tri], [1311, '편지'], [1334, tri], [1370, '검토'], [1393, tri], [1425, '도구'], [1450, tri],
    [1489, `<span class="purple">${svg(16, 12, `<path d="M0 0h16v3H0zM0 5h6v2H0zM0 9h6v2H0zM8 5h3v2H8zM8 9h3v2H8z" fill="#a487c7"/>`)}<span style="width:1px;height:13px;background:#a487c7"></span>${svg(15, 12, `<path d="M0 0h15v3H0zM0 5h4v2H0zM5.500 5h4v2h-4zM11 5h4v2h-4zM0 9h4v2H0zM5.500 9h4v2h-4zM11 9h4v2h-4z" fill="#a487c7"/>`)}</span>`],
    [1696, `<span class="fd">찾을 내용</span>`], [1839, '<span class="tri" style="border-top-color:#ddd"></span>'], [1866, svg(9, 5, `<path d="M.5 4.500l4-4 4 4" stroke="#bbb"/>`)], [1898, svg(9, 9, `<path d="M.5.5l8 8M8.500.5l-8 8" stroke="#bbb" stroke-width="1.200"/>`)]]);
  const item = (label, ic, opt = '') => `<hw-item label="${label}" ${opt}>${ic}</hw-item>`;
  const rs = '<span class="rs"></span>';
  const ribbon = line(X, [
    [962, item('오려|두기', hi.scissors, 'disabled')], [1007, item('복사하기', hi.copy, 'disabled')], [1058, item('붙이기', hi.paste, 'drop')], [1098, item('모양|복사', hi.format)], [1123, rs],
    [1149, item('글자|모양', hi.charShape)], [1185, item('문단|모양', hi.para)], [1225, item('스타일', hi.style, 'drop')], [1254, rs],
    [1280, item('세로', hi.portrait, 'active')], [1316, item('가로', hi.landscape)], [1352, item('여백', hi.margin, 'drop')], [1388, item('단', hi.columns, 'drop')], [1413, rs],
    [1438, item('도형', hi.shape, 'drop')], [1474, item('그림', hi.picture, 'drop')], [1510, item('표', hi.table, 'drop')], [1546, item('차트', hi.chart, 'drop')], [1571, rs],
    [1596, item('선택', hi.select, 'drop')], [1632, item('찾기', hi.binoculars, 'drop')], [1676, item('글자|바꾸기', hi.replace)], [1721, item('글자|정렬', hi.sortAsc)],
  ]);
  const ts = '<span class="ts"></span>';
  const sty = hi.style.replace('class="st"', 'class="st" style="transform:scale(.62)"');
  const fontIc = `<span style="position:relative;display:block;width:15px;height:14px;flex:none"><span style="position:absolute;left:0;top:0;font:700 13px/14px 'Liberation Sans';color:#4a72c0">T</span><span style="position:absolute;right:0;top:0">${svg(11, 10, `<path d="M5.500 0l5.500 10H0z" fill="#f5c518"/>`)}</span></span>`;
  const tool = line(X, [[957, hi.new], [973, tri], [993, hi.open], [1009, tri], [1029, hi.save], [1045, tri], [1061, ts], [1081, hi.print], [1103, hi.preview], [1121, ts],
    [1141, hi.undo], [1157, tri], [1177, hi.redo], [1196, ts], [1215, sty], [1231, tri], [1248, ts],
    [1318, `<span class="sel" style="width:118px">${fontIc}<span>휴먼고딕</span><span style="flex:1"></span>${tri}</span>`],
    [1437, `<span class="sel" style="width:106px;padding-right:0"><span style="font:12px 'Liberation Sans'">10.0</span><span style="flex:1"></span><span style="font:12px 'Liberation Sans'">pt</span>${tri}<span style="width:13px;border-left:1px solid #ccc;height:17px;display:flex;flex-direction:column;align-items:center;justify-content:space-around;padding:2px 0">${svg(5, 3, `<path d="M0 3l2.500-3L5 3z" fill="#666"/>`)}${svg(5, 3, `<path d="M0 0l2.500 3L5 0z" fill="#666"/>`)}</span></span>`],
    [1503, '<b>가</b>'], [1526, '<i style="color:#555">가</i>'], [1549, '<u>가</u>'], [1563, tri], [1583, '<s>가</s>'],
    [1605, `<span style="display:flex;flex-direction:column;align-items:center;line-height:11px;color:#a33;font-size:11px">가<i style="display:block;width:16px;height:4px;background:#000"></i></span>`], [1621, tri],
    [1642, `<span style="display:flex;flex-direction:column;align-items:center">${svg(16, 11, `<path d="M3 11l2-4 6-6 3 2-6 6z" fill="#e3c23a" stroke="#666" stroke-width=".6"/>`)}<i style="display:block;width:16px;height:4px;background:#ff0"></i></span>`], [1657, tri], [1673, ts],
    [1693, icon.al('l', '#333')], [1715, `<span style="width:20px;height:20px;background:#cfdcf3;border:1px solid #9db6e6;border-radius:2px;display:flex;align-items:center;justify-content:center">${icon.al('c', '#333')}</span>`], [1737, icon.al('r', '#333')], [1759, icon.al('j', '#333')],
    [1781, svg(15, 13, `<path d="M0 1.500h15M0 4.800h15M0 8h15" stroke="#333"/><path d="M0 11.500h15" stroke="#333" stroke-dasharray="1 1"/>`)], [1799, ts],
    [1822, `<span style="display:flex;align-items:center;gap:1px"><span style="font-size:9px;line-height:9px;display:flex;flex-direction:column;color:#444">가<span>나</span></span>${svg(7, 14, `<path d="M0 .5h7M0 13.500h7M3.500 1v12" stroke="#4a72c0"/>`)}</span>`], [1835, tri]]);
  const hnums = [8, 6, 4, 2, ''];
  for (let i = 2; i <= 50; i += 2) hnums.push(i);
  const vnums = [6, 4, 2, ''];
  for (let i = 2; i <= 40; i += 2) vnums.push(i);
  const status = line(X, [[958, '1/1 쪽'], [985, '<span class="ss"></span>'], [1023, '45 개 낱말'], [1060, '<span class="ss"></span>'], [1083, '삽입'], [1104, '<span class="ss"></span>'], [1165, '변경 내용:기록 중지'], [1224, '<span class="ss"></span>'],
    [1616, svg(13, 15, `<rect x=".5" y=".5" width="12" height="14" stroke="#888"/><path d="M3 7.500h1M9 7.500h1" stroke="#4a6cb8" stroke-width="2"/>`)],
    [1645, svg(13, 15, `<rect x=".5" y=".5" width="12" height="14" stroke="#4a6cb8"/><rect x="3" y="3" width="7" height="9" fill="#888"/>`)], [1665, '<span class="ss" style="height:16px"></span>'],
    [1686, svg(12, 15, `<rect x=".5" y=".5" width="11" height="14" stroke="#888"/><rect x="4" y="5" width="4" height="5" fill="#4a6cb8"/>`)], [1750, '<span class="hsl"><i></i></span>'],
    [1812, svg(12, 15, `<rect x=".5" y=".5" width="11" height="14" stroke="#4a6cb8"/><rect x="2" y="2" width="8" height="11" fill="#a9bfe4"/>`)],
    [1844, icon.search('#777', 15)], [1874, '100%']]);
  return `<div class="title"><span class="logo">${svg(30, 23, `<path d="M0 1h31l-5 17c-1 3-3 5-6 5H0z" fill="#4a6fc8"/><path d="M5 7h8M5 11h8M5 15h8" stroke="#fff" stroke-width="1.200"/><path d="M16 17l3-9 2-2" stroke="#fff" stroke-width="1.800"/>`)}</span>${title}</div>
    <div class="menu">${menu}</div>
    <div class="ribbon">${ribbon}</div>
    <div class="tool">${tool}</div>
    <div class="work">
      <div class="corner-wrap"><span class="corner"></span></div>
      <div class="hr">${hnums.map((n, i) => `<span class="${i ? '' : 'first'}">${n}</span>`).join('')}
        <span class="mk" style="left:108px;top:-3px">${svg(10, 24, `<path d="M.5.5h9v3L6 8l3.500 5H.5L4 8 .5 3.500z" fill="#fff" stroke="#888"/><rect x=".5" y="15.500" width="9" height="6" fill="#fff" stroke="#888"/>`)}</span>
        <span class="mk" style="left:260px;top:8px">${svg(9, 7, `<path d="M.5 6.500v-3l4-3 4 3v3z" fill="#fff" stroke="#888"/>`)}</span>
        <span class="mk" style="left:481px;top:0;width:1px;height:13px;background:#888"></span>
        <span class="mk" style="left:660px;top:2px;width:3px;height:9px;border:solid #777;border-width:0 1px"></span>
      </div>
      <div class="topgap"></div>
      <div class="vs-bar">
        <span class="sb" style="height:12px"><i style="width:9px;height:2px;background:#666;display:block"></i></span>
        <span class="sb" style="height:14px">${svg(7, 4, `<path d="M0 4l3.500-4L7 4z" fill="#555"/>`)}</span>
        <span class="thumb"></span><span class="gap"></span>
        <span class="sb" style="height:14px;margin-bottom:21px">${svg(7, 4, `<path d="M0 0l3.500 4L7 0z" fill="#555"/>`)}</span>
      </div>
      <div class="vwrap"><div class="vr">${vnums.map(n => `<span>${n}</span>`).join('')}</div>
        <span class="mk" style="left:10px;top:258px">${svg(9, 9, `<path d="M.5.5h8v3h-5v5h-3z" fill="#fff" stroke="#888"/>`)}</span>
        <span class="mk" style="left:20px;top:279px">${svg(9, 9, `<path d="M8.500 8.500h-8v-3h5v-5h3z" fill="#fff" stroke="#888"/>`)}</span></div>
      <div class="page">
        <div class="h">만족도 조사</div>
        <div class="tbl"><span class="grip">${svg(13, 13, `<rect x=".5" y=".5" width="12" height="12" stroke="#222"/><rect x="2" y="2" width="4" height="4" fill="#666"/><rect x="7" y="2" width="4" height="4" fill="#666"/><rect x="2" y="7" width="4" height="4" fill="#666"/><rect x="7" y="7" width="4" height="4" fill="#666"/>`)}</span><doc-table variant="han"></doc-table></div>
        <span class="crop l"></span><span class="crop r"></span>
        <div class="ctrl">${svg(16, 16, `<rect x="1" y="2" width="10" height="12" fill="#d9b877" stroke="#555"/><rect x="6" y="5" width="9" height="10" fill="#fff" stroke="#444"/>`)}<span style="white-space:nowrap">(Ctrl)</span><span class="tri" style="margin-left:3px"></span></div>
      </div>
      <div class="side"></div>
      <div class="hs-bar">${svg(8, 13, `<path d="M6 3L2 6.500 6 10z" fill="#999"/>`)}<span class="hthumb"></span>${svg(8, 13, `<path d="M2 3l4 3.500L2 10z" fill="#777"/>`)}<span class="sb" style="height:13px;margin-left:8px"></span></div>
    </div>
    <div class="status">${status}</div>`;
});

/* ---------- taskbar ---------- */
const tb = {
  win: svg(17, 17, `<path d="M0 2.500L7 1.500v6.500H0zM8 1.300L17 0v8H8zM0 9h7v6.500l-7-1zM8 9h9v8l-9-1.300z" fill="#fff"/>`),
  search: svg(18, 20, `<circle cx="11" cy="7" r="5.500" stroke="#fff" stroke-width="1.300"/><path d="M7 11.500L2 18" stroke="#fff" stroke-width="1.500"/>`),
  view: svg(17, 20, `<path d="M2 1h9M2 18h9" stroke="#fff"/><rect x="1.500" y="5.500" width="10" height="8" stroke="#fff"/><rect x="14" y="8" width="3" height="4" fill="#fff"/>`),
  folder: svg(22, 20, `<path d="M1 2h8l2 2h10v15H1z" fill="#f2c14b"/><path d="M1 7h20v12H1z" fill="#f9d976"/><path d="M8 19v-6l3-3 3 3v6z" fill="#2b7cd3"/>`),
  pad: svg(22, 26, `<path d="M5 2l15-1-3 22-14 2z" fill="#a9d7d6" stroke="#d3eeee"/><path d="M7 4l6 0-3 18-5 1z" fill="#6b9da0"/>`),
  capture: svg(20, 34, `<path d="M6 2c8 0 10 6 7 18" stroke="#d8432b" stroke-width="3"/><path d="M5 3c-3 6-1 12 5 18" stroke="#ef5b32" stroke-width="3"/><circle cx="5" cy="26" r="3.500" stroke="#2e6fd0" stroke-width="2"/><circle cx="15" cy="27" r="3.500" stroke="#2e6fd0" stroke-width="2"/>`),
  page: svg(16, 20, `<path d="M0 0h11l5 5v15H0z" fill="#fff"/>`),
  ie: `<span style="position:relative;display:block;width:24px;height:26px"><span style="position:absolute;left:2px;top:-9px;font:700 36px/38px 'Liberation Sans';color:#29a8ea">e</span><span style="position:absolute;left:0;top:8px;width:24px;height:10px;border:1.500px solid #f1c232;border-radius:50%;transform:rotate(-35deg)"></span></span>`,
  edge: `<span style="display:block;position:relative;width:24px;height:27px;border-radius:50%;background:linear-gradient(135deg,#37c8ab 0 30%,#1c86d8 55%,#0d5fb0)"><span style="position:absolute;left:10px;top:12px;width:9px;height:9px;background:#0f3f78;border-radius:50% 0 50% 50%"></span></span>`,
  kakao: `<span style="display:flex;width:24px;height:26px;background:#f8e019;align-items:center;justify-content:center;border-radius:2px"><span style="background:#3b1d1e;color:#f8e019;font:700 5px/8px 'Liberation Sans';border-radius:50%;padding:3px 2px">TALK</span></span>`,
  chrome: `<span style="position:relative;display:block;width:24px;height:24px;border-radius:50%;background:conic-gradient(#ea4335 0 120deg,#fbbc05 120deg 240deg,#34a853 240deg)"><span style="position:absolute;left:7px;top:7px;width:10px;height:10px;border-radius:50%;background:#4285f4;border:2px solid #fff"></span><span style="position:absolute;left:9px;top:12px;width:16px;height:18px;border-radius:50%;background:rgba(130,140,150,.85)"></span></span>`,
  word: `<span style="display:flex;width:24px;height:24px;align-items:center;position:relative;background:linear-gradient(#41a5ee 25%,#2b7cd3 25% 50%,#185abd 50% 75%,#103f91 75%);margin-left:1px;border-radius:2px"><b style="position:absolute;left:-3px;top:5px;width:14px;height:14px;background:#185abd;color:#fff;font:700 10px/14px 'Liberation Sans';text-align:center">W</b></span>`,
  hancom: `<span style="display:block;width:24px;height:24px;background:#fff;border-radius:5px;padding:4px"><span style="display:block;width:16px;height:16px;background:conic-gradient(#e8423f 0 90deg,#2fb6a3 90deg 180deg,#f4b731 180deg 270deg,#4a6fc8 270deg);transform:skew(-15deg);border-radius:2px"></span></span>`,
  hangul: `<span style="display:flex;width:23px;height:24px;background:#1692c9;color:#fff;border-radius:2px;align-items:center;justify-content:center;font-size:15px;font-weight:500;line-height:1">한</span>`,
  hanword: `<span style="display:block;width:23px;height:24px;background:#4a6fd0;border-radius:2px;padding:5px 3px">${svg(16, 14, `<path d="M0 2h8M0 7h8M0 12h8" stroke="#fff" stroke-width="1.400"/><path d="M12 13l3-11" stroke="#fff" stroke-width="2"/>`)}</span>`,
};
define('task-bar', `
  :host { display: flex; height: 40px; background: #101010; color: #f2f2f2; font-size: 12px; align-items: stretch; }
  .tk { flex: none; display: flex; align-items: center; justify-content: center; height: 40px; }
  .app { flex: none; width: 152px; height: 40px; display: flex; align-items: center; gap: 4px; padding-left: 6px; border-bottom: 3px solid #5ea9dd; margin-right: 9px; white-space: nowrap; overflow: hidden; }
  .app .n { flex: none; display: block; }
  .app.on { background: #333; width: 160px; padding-left: 10px; margin-right: 0; gap: 8px; }
  .tray { flex: 1; display: flex; align-items: center; height: 40px; }
  .clock { text-align: center; line-height: 18px; font-size: 12px; }
`, () => {
  const tk = (w, ic) => `<span class="tk" style="width:${w}px">${ic}</span>`;
  const app = (ic, t, on) => `<span class="app${on ? ' on' : ''}"><span class="n">${ic}</span><span>${t}</span></span>`;
  const tray = line(1402, [[1661, svg(13, 8, `<path d="M1 7l5.500-6L12 7" stroke="#fff" stroke-width="1.300"/>`)],
    [1682, svg(17, 14, `<path d="M1 5h3l4-4v12l-4-4H1zM10.500 4c1.500 2 1.500 4 0 6M13 2c2.500 3 2.500 7 0 10" stroke="#eee"/>`)],
    [1713, svg(16, 18, `<path d="M1 17c3-4 2-7 5-11s5-5 6-4-1 4-4 7-2 5-5 8zM11 9c2 0 3-1 4 0" stroke="#eee"/>`)],
    [1739, '<span style="font-size:13px">가</span>'], [1769, '<span style="display:block;width:14px;height:17px;background:#fff;color:#000;font-size:12px;line-height:17px;text-align:center;font-weight:500">한</span>'],
    [1826, '<span class="clock">오후 3:45<br>2022-09-03</span>'],
    [1888, svg(16, 16, `<path d="M.5.5h15v11H10l-2 3-2-3H.5z" stroke="#fff"/>`)]]);
  return `${tk(48, tb.win)}${tk(49, tb.search)}${tk(48, tb.view)}${tk(50, tb.folder)}${tk(50, tb.pad)}
    ${app(tb.capture, '캡처 및 스케치', true)}
    ${tk(50, tb.page)}${tk(48, tb.ie)}${tk(50, tb.edge)}${tk(50, tb.kakao)}<span style="width:3px;flex:none"></span>
    ${app(tb.chrome, '제목 없는 문서 - G...')}${app(tb.word, '만족도조사.docx - ...')}${app(tb.hancom, '한컴오피스')}${app(tb.hangul, '빈 문서 1 - 한글')}<span class="app" style="margin-right:0"><span class="n">${tb.hanword}</span><span>새 문서 1 - 한워드</span></span>
    <span class="tray">${tray}</span>`;
});

define('desktop-shell', `
  :host { display: flex; flex-direction: column; width: 1920px; height: 1080px; overflow: hidden; }
  .wins { display: flex; height: 1040px; flex: none; }
`, `<div class="wins"><word-window></word-window><han-window></han-window></div><task-bar></task-bar>`);
</script>
</body>
</html>
